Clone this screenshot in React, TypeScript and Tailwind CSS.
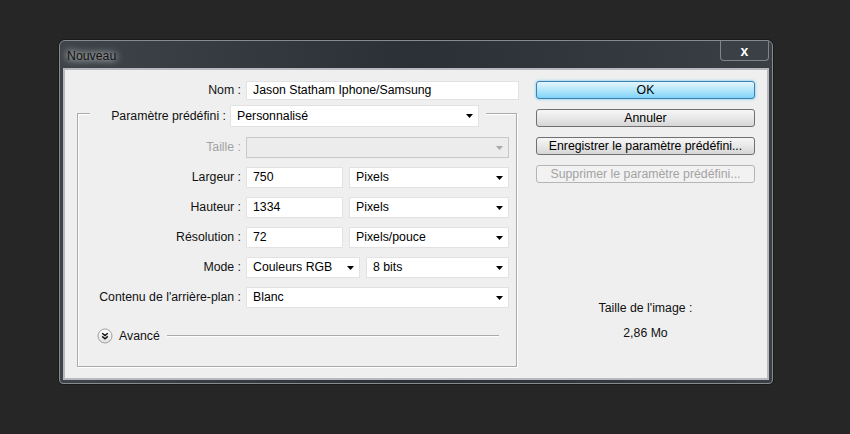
import React from "react";

const font = { fontFamily: '"Liberation Sans", Arial, sans-serif' };

const Arrow = ({ disabled = false }: { disabled?: boolean }) => (
  <svg width="7" height="4" viewBox="0 0 7 4" className="shrink-0">
    <path d="M0 0H7L3.5 4Z" fill={disabled ? "#a8a8a8" : "#000"} />
  </svg>
);

const Field = ({
  value,
  width,
  select = false,
}: {
  value: string;
  width: string;
  select?: boolean;
}) => (
  <div
    className={`${width} flex h-[21px] shrink-0 items-center justify-between border border-[#e2e2e2] bg-white pl-[6px] pr-[5px] text-[12.3px] text-black`}
  >
    <span>{value}</span>
    {select && <Arrow />}
  </div>
);

const Row = ({
  label,
  disabled = false,
  children,
}: {
  label: string;
  disabled?: boolean;
  children: React.ReactNode;
}) => (
  <div className="flex h-[21px] items-center">
    <div
      className={`w-[163px] shrink-0 text-right text-[12.3px] ${disabled ? "text-[#a3a3a3]" : "text-[#111]"}`}
    >
      {label}
    </div>
    <div className="ml-[5px] flex items-center gap-[6px]">{children}</div>
  </div>
);

const Button = ({
  children,
  variant = "normal",
}: {
  children: React.ReactNode;
  variant?: "default" | "normal" | "disabled";
}) => {
  const styles = {
    default:
      "border-[#3c7fb1] bg-gradient-to-b from-[#e3f6fe] via-[#b3e6fb] to-[#7fd3f6] text-black shadow-[0_0_3px_#5ec6f3]",
    normal:
      "border-[#707070] bg-gradient-to-b from-[#f6f6f6] via-[#e8e8e8] to-[#d6d6d6] text-black",
    disabled: "border-[#b5b5b5] bg-[#f2f2f2] text-[#a3a3a3]",
  };
  return (
    <div
      className={`flex h-[18px] w-full items-center justify-center rounded-[3px] border text-[12.3px] ${styles[variant]}`}
    >
      {children}
    </div>
  );
};

export default function App() {
  return (
    <div
      className="h-[434px] w-[850px] overflow-hidden bg-[#262626] pt-[40px] pl-[59px]"
      style={font}
    >
      {/* window frame */}
      <div className="flex h-[344px] w-[714px] flex-col rounded-t-[6px] rounded-b-[4px] border border-[#868b90] bg-gradient-to-r from-[#3e444a] via-[#2a3036] to-[#3a3f45] shadow-[0_0_0_1px_#1a1a1a]">
        {/* title bar */}
        <div className="flex h-[27px] items-start">
          <div className="pt-[6px] pl-[7px] text-[12.3px] text-[#111] [text-shadow:0_0_6px_rgba(255,255,255,0.9),0_0_10px_rgba(255,255,255,0.6)]">
            Nouveau
          </div>
          <div className="mr-[3px] ml-auto flex h-[20px] w-[49px] items-center justify-center rounded-b-[4px] border border-t-0 border-[#80858a] bg-[#3a4046] text-[14px] leading-none font-bold text-white">
            x
          </div>
        </div>

        {/* client area */}
        <div className="mx-[3px] h-[312px] border-2 border-[#b6babe] bg-[#efefef]">
          <div className="flex">
            {/* left column */}
            <div className="w-[452px] shrink-0">
              <div className="mt-[11px] flex h-[19px] items-center">
                <div className="w-[176px] shrink-0 text-right text-[12.3px] text-[#111]">Nom :</div>
                <div className="ml-[5px] flex h-[19px] w-[273px] shrink-0 items-center border border-[#e2e2e2] bg-white pl-[6px] text-[12.3px] text-black">
                  Jason Statham Iphone/Samsung
                </div>
              </div>

              {/* group box */}
              <div className="mt-[13px] ml-[12px] h-[254px] w-[440px] border border-[#ababab] shadow-[inset_1px_1px_0_#fff,1px_1px_0_#fff]">
                <div className="-mt-[9px] ml-[12px] flex h-[22px] w-[396px] items-center bg-[#efefef]">
                  <div className="w-[136px] shrink-0 text-right text-[12.3px] text-[#111]">
                    Paramètre prédéfini :
                  </div>
                  <div className="ml-[4px] flex h-[22px] w-[249px] shrink-0 items-center justify-between border border-[#e2e2e2] bg-white pl-[6px] pr-[5px] text-[12.3px] text-black">
                    <span>Personnalisé</span>
                    <Arrow />
                  </div>
                </div>

                <div className="mt-[10px] flex flex-col gap-[9px]">
                  <Row label="Taille :" disabled>
                    <div className="flex h-[21px] w-[263px] items-center justify-end border border-[#c8c8c8] bg-[#ececec] pr-[5px]">
                      <Arrow disabled />
                    </div>
                  </Row>
                  <Row label="Largeur :">
                    <Field value="750" width="w-[97px]" />
                    <Field value="Pixels" width="w-[160px]" select />
                  </Row>
                  <Row label="Hauteur :">
                    <Field value="1334" width="w-[97px]" />
                    <Field value="Pixels" width="w-[160px]" select />
                  </Row>
                  <Row label="Résolution :">
                    <Field value="72" width="w-[97px]" />
                    <Field value="Pixels/pouce" width="w-[160px]" select />
                  </Row>
                  <Row label="Mode :">
                    <Field value="Couleurs RGB" width="w-[114px]" select />
                    <Field value="8 bits" width="w-[143px]" select />
                  </Row>
                  <Row label="Contenu de l'arrière-plan :">
                    <Field value="Blanc" width="w-[263px]" select />
                  </Row>
                </div>

                <div className="mt-[20px] flex h-[16px] items-center pr-[17px]">
                  <svg width="16" height="16" viewBox="0 0 16 16" className="ml-[19px] shrink-0">
                    <defs>
                      <linearGradient id="av" x1="0" y1="0" x2="0" y2="1">
                        <stop offset="0" stopColor="#ffffff" />
                        <stop offset="1" stopColor="#e0e0e0" />
                      </linearGradient>
                    </defs>
                    <circle cx="8" cy="8" r="7" fill="url(#av)" stroke="#a0a0a0" />
                    <path
                      d="M5.2 5.2L8 7.6L10.8 5.2M5.2 8.4L8 10.8L10.8 8.4"
                      fill="none"
                      stroke="#111"
                      strokeWidth="1.4"
                    />
                  </svg>
                  <span className="ml-[6px] text-[12.3px] text-[#111]">Avancé</span>
                  <div className="ml-[7px] h-[2px] flex-1 border-t border-b border-t-[#ababab] border-b-white" />
                </div>
              </div>
            </div>

            {/* right column */}
            <div className="mt-[11px] ml-[19px] flex w-[219px] shrink-0 flex-col">
              <div className="flex flex-col gap-[10px]">
                <Button variant="default">OK</Button>
                <Button>Annuler</Button>
                <Button>Enregistrer le paramètre prédéfini...</Button>
                <Button variant="disabled">Supprimer le paramètre prédéfini...</Button>
              </div>
              <div className="mt-[118px] text-center text-[12.3px] leading-[14px] text-[#111]">
                Taille de l'image :
              </div>
              <div className="mt-[11px] text-center text-[12.3px] leading-[14px] text-[#111]">
                2,86 Mo
              </div>
            </div>
          </div>
        </div>
      </div>
    </div>
  );
}
